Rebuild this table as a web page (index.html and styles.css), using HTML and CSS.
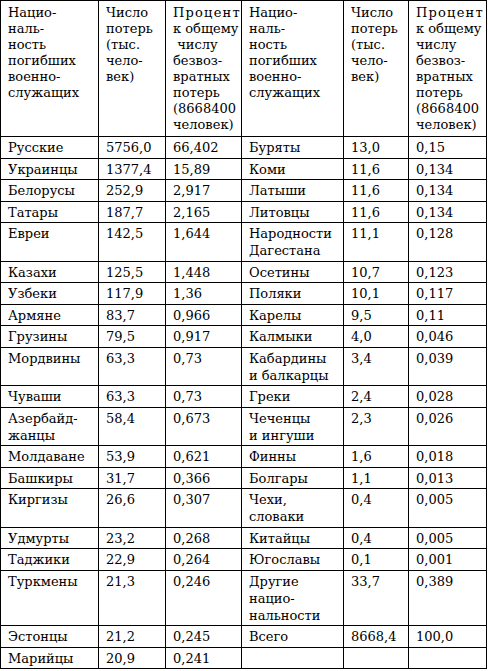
FILE: index.html
```html
<!DOCTYPE html>
<html lang="ru">

<head>
    <meta charset="UTF-8">
    <meta name="viewport" content="width=device-width, initial-scale=1.0">
    <title>Потери по национальностям</title>
    <link rel="stylesheet" href="styles.css">
</head>

<body>
    <table class="losses">
        <colgroup>
            <col class="c-name">
            <col class="c-num">
            <col class="c-pct">
            <col class="c-name2">
            <col class="c-num2">
            <col class="c-pct2">
        </colgroup>
        <thead>
            <tr>
                <th>Нацио-<br>наль-<br>ность<br>погибших<br>военно-<br>служащих</th>
                <th>Число<br>потерь<br>(тыс.<br>чело-<br>век)</th>
                <th><span class="spaced">Процент</span><br>к общему<br>&nbsp;числу<br>безвоз-<br>вратных<br>потерь<br>(8668400<br>человек)</th>
                <th>Нацио-<br>наль-<br>ность<br>погибших<br>военно-<br>служащих</th>
                <th>Число<br>потерь<br>(тыс.<br>чело-<br>век)</th>
                <th><span class="spaced">Процент</span><br>к общему<br>числу<br>безвоз-<br>вратных<br>потерь<br>(8668400<br>человек)</th>
            </tr>
        </thead>
        <tbody>
            <tr><td>Русские</td><td>5756,0</td><td>66,402</td><td>Буряты</td><td>13,0</td><td>0,15</td></tr>
            <tr><td>Украинцы</td><td>1377,4</td><td>15,89</td><td>Коми</td><td>11,6</td><td>0,134</td></tr>
            <tr><td>Белорусы</td><td>252,9</td><td>2,917</td><td>Латыши</td><td>11,6</td><td>0,134</td></tr>
            <tr><td>Татары</td><td>187,7</td><td>2,165</td><td>Литовцы</td><td>11,6</td><td>0,134</td></tr>
            <tr><td>Евреи</td><td>142,5</td><td>1,644</td><td>Народности<br>Дагестана</td><td>11,1</td><td>0,128</td></tr>
            <tr><td>Казахи</td><td>125,5</td><td>1,448</td><td>Осетины</td><td>10,7</td><td>0,123</td></tr>
            <tr><td>Узбеки</td><td>117,9</td><td>1,36</td><td>Поляки</td><td>10,1</td><td>0,117</td></tr>
            <tr><td>Армяне</td><td>83,7</td><td>0,966</td><td>Карелы</td><td>9,5</td><td>0,11</td></tr>
            <tr><td>Грузины</td><td>79,5</td><td>0,917</td><td>Калмыки</td><td>4,0</td><td>0,046</td></tr>
            <tr><td>Мордвины</td><td>63,3</td><td>0,73</td><td>Кабардины<br>и балкарцы</td><td>3,4</td><td>0,039</td></tr>
            <tr><td>Чуваши</td><td>63,3</td><td>0,73</td><td>Греки</td><td>2,4</td><td>0,028</td></tr>
            <tr><td>Азербайд-<br>жанцы</td><td>58,4</td><td>0,673</td><td>Чеченцы<br>и ингуши</td><td>2,3</td><td>0,026</td></tr>
            <tr><td>Молдаване</td><td>53,9</td><td>0,621</td><td>Финны</td><td>1,6</td><td>0,018</td></tr>
            <tr><td>Башкиры</td><td>31,7</td><td>0,366</td><td>Болгары</td><td>1,1</td><td>0,013</td></tr>
            <tr><td>Киргизы</td><td>26,6</td><td>0,307</td><td>Чехи,<br>словаки</td><td>0,4</td><td>0,005</td></tr>
            <tr><td>Удмурты</td><td>23,2</td><td>0,268</td><td>Китайцы</td><td>0,4</td><td>0,005</td></tr>
            <tr><td>Таджики</td><td>22,9</td><td>0,264</td><td>Югославы</td><td>0,1</td><td>0,001</td></tr>
            <tr><td>Туркмены</td><td>21,3</td><td>0,246</td><td>Другие<br>нацио-<br>нальности</td><td>33,7</td><td>0,389</td></tr>
            <tr><td>Эстонцы</td><td>21,2</td><td>0,245</td><td>Всего</td><td>8668,4</td><td>100,0</td></tr>
            <tr><td>Марийцы</td><td>20,9</td><td>0,241</td><td></td><td></td><td></td></tr>
        </tbody>
    </table>
</body>

</html>
```

FILE: styles.css
```css
body {
    margin: 0;
    background: #fff;
    color: #000;
    font-family: "DejaVu Serif", "Liberation Serif", serif;
    font-size: 13px;
}

.losses {
    border-collapse: collapse;
    table-layout: fixed;
    width: 486px;
}

.c-name { width: 98px; }
.c-num { width: 67px; }
.c-pct { width: 76px; }
.c-name2 { width: 102px; }
.c-num2 { width: 65px; }
.c-pct2 { width: 78px; }

.losses th,
.losses td {
    border: 1px solid #000;
    vertical-align: top;
    text-align: left;
    white-space: nowrap;
    overflow: hidden;
}

.losses th {
    font-weight: normal;
    line-height: 16px;
    padding: 4px 4px 3px 7px;
}

.losses td {
    line-height: 17px;
    padding: 2px 4px 1.5px 7px;
}

.spaced {
    letter-spacing: 1.2px;
}
```
